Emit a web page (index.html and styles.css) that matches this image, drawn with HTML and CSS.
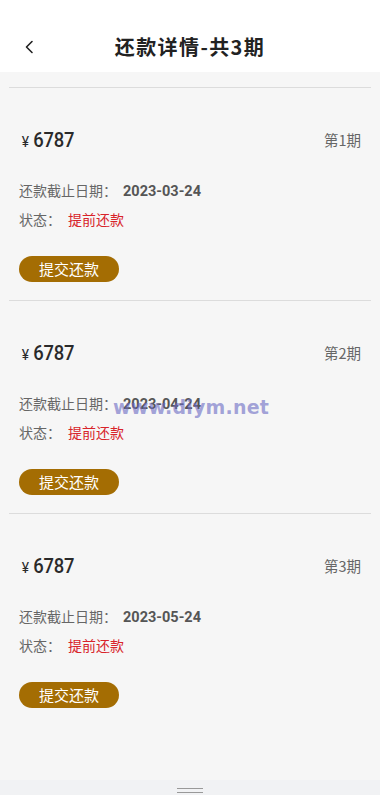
FILE: index.html
```html
<!DOCTYPE html>
<html lang="zh-CN">
<head>
<meta charset="utf-8">
<title>还款详情</title>
<link rel="stylesheet" href="styles.css">
</head>
<body>
<div class="page">
  <header class="topbar">
    <span class="back">
      <svg width="12" height="14" viewBox="0 0 12 14"><polyline points="8,1.5 2.5,7 8,12.5" fill="none" stroke="#222" stroke-width="1.6" stroke-linecap="round" stroke-linejoin="round"/></svg>
    </span>
    <h1 class="title">还款详情-共3期</h1>
  </header>
  <main class="list">
    <section class="item">
      <div class="row-top">
        <div class="amount"><span class="yen">¥</span>6787</div>
        <div class="period">第1期</div>
      </div>
      <div class="line">还款截止日期：<b class="date">2023-03-24</b></div>
      <div class="line line-status">状态：<span class="status">提前还款</span></div>
      <button class="btn">提交还款</button>
    </section>
    <section class="item">
      <div class="row-top">
        <div class="amount"><span class="yen">¥</span>6787</div>
        <div class="period">第2期</div>
      </div>
      <div class="line">还款截止日期：<b class="date">2023-04-24</b></div>
      <div class="line line-status">状态：<span class="status">提前还款</span></div>
      <button class="btn">提交还款</button>
    </section>
    <section class="item">
      <div class="row-top">
        <div class="amount"><span class="yen">¥</span>6787</div>
        <div class="period">第3期</div>
      </div>
      <div class="line">还款截止日期：<b class="date">2023-05-24</b></div>
      <div class="line line-status">状态：<span class="status">提前还款</span></div>
      <button class="btn">提交还款</button>
    </section>
    <div class="watermark">www.diym.net</div>
  </main>
  <footer class="handlebar"><span class="handle"></span></footer>
</div>
</body>
</html>
```
FILE: styles.css
```css
* { box-sizing: border-box; }
html, body { margin: 0; padding: 0; }
body {
  font-family: "Noto Sans", "Noto Sans CJK SC", sans-serif;
  background: #f6f6f6;
  color: #333;
}
.page {
  width: 380px;
  height: 795px;
  display: flex;
  flex-direction: column;
  overflow: hidden;
}
.topbar {
  height: 72px;
  background: #fff;
  position: relative;
  display: flex;
  align-items: center;
  justify-content: center;
  padding-top: 22px;
  flex: none;
}
.back {
  position: absolute;
  left: 24px;
  top: 40px;
  width: 12px;
  height: 14px;
  display: flex;
}
.title {
  margin: 0;
  font-size: 20px;
  font-weight: 700;
  color: #222;
  letter-spacing: 1.4px;
  line-height: 24px;
  font-family: "Noto Sans CJK SC", sans-serif;
}
.list {
  flex: 1;
  padding: 15px 9px 0;
  position: relative;
}
.item {
  border-top: 1px solid #dcdcdc;
  height: 213px;
  padding: 41px 10px 0;
  display: flex;
  flex-direction: column;
  align-items: flex-start;
}
.row-top {
  width: 100%;
  height: 24px;
  flex: none;
  display: flex;
  justify-content: space-between;
  align-items: center;
}
.amount {
  font-family: Roboto, "Liberation Sans", sans-serif;
  font-weight: 500;
  font-size: 20px;
  color: #2a2a2a;
  letter-spacing: -0.3px;
  transform: scaleX(0.92);
  transform-origin: left center;
  line-height: 24px;
  padding-left: 3px;
}
.yen {
  font-size: 15px;
  margin-right: 5px;
  font-weight: 400;
}
.period {
  font-size: 14.5px;
  color: #666;
  font-family: "Noto Sans CJK SC", sans-serif;
  margin-top: -4px;
}
.line {
  font-size: 14px;
  line-height: 20px;
  height: 20px;
  flex: none;
  color: #666;
  margin-top: 27px;
  font-family: "Noto Sans CJK SC", sans-serif;
}
.line-status { margin-top: 9px; }
.date {
  font-family: Roboto, "Liberation Sans", sans-serif;
  font-weight: 700;
  font-size: 14.5px;
  color: #555;
  margin-left: 6px;
}
.status {
  color: #d8232a;
  margin-left: 7px;
}
.btn {
  margin-top: 27px;
  width: 100px;
  height: 26px;
  flex: none;
  border: none;
  border-radius: 13px;
  background: #a46d03;
  color: #fff;
  font-size: 15px;
  font-family: "Noto Sans CJK SC", sans-serif;
  padding: 0;
  line-height: 26px;
}
.watermark {
  position: absolute;
  left: 113px;
  top: 324px;
  font-family: "DejaVu Sans", sans-serif;
  font-weight: 700;
  font-size: 19px;
  color: rgba(105, 105, 195, 0.6);
  letter-spacing: 0.2px;
}
.handlebar {
  height: 15px;
  background: #f1f2f4;
  flex: none;
  display: flex;
  justify-content: center;
  padding-top: 8px;
}
.handle {
  width: 26px;
  height: 5px;
  border-top: 1px solid #999;
  border-bottom: 1px solid #999;
}
```
